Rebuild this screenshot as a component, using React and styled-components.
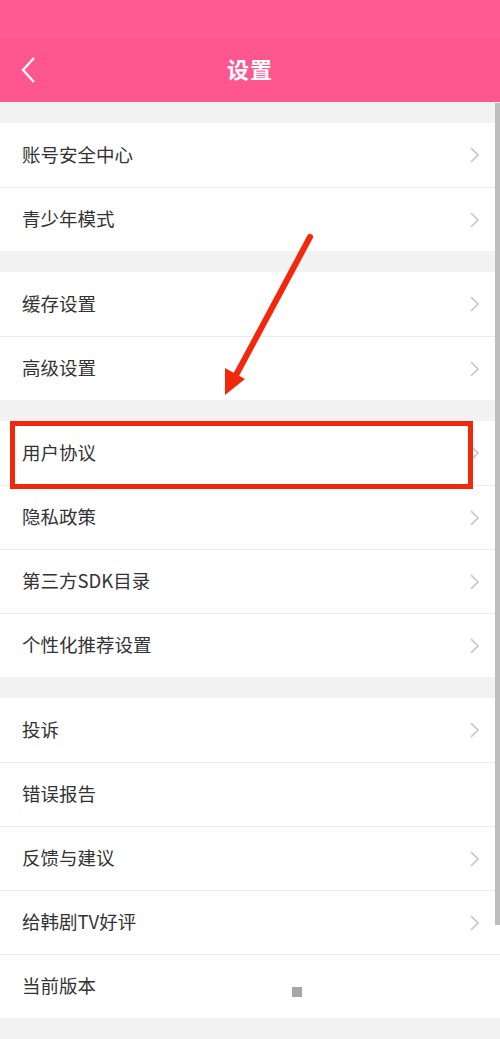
import React from 'react';
import styled, { createGlobalStyle } from 'styled-components';

const GlobalStyle = createGlobalStyle`
  html, body {
    margin: 0;
    padding: 0;
    background: #f2f2f2;
  }
  body {
    font-family: "Noto Sans CJK SC", "Noto Sans", sans-serif;
  }
`;

const Page = styled.div`
  position: relative;
  width: 500px;
  height: 1039px;
  overflow: hidden;
  background: #f2f2f2;
`;

const Header = styled.header`
  height: 102px;
  background: #fe5790;
  display: flex;
  flex-direction: column;
`;

const StatusBar = styled.div`
  height: 38px;
  background: #ff5a92;
`;

const NavBar = styled.div`
  flex: 1;
  display: flex;
  align-items: center;
  justify-content: center;
  position: relative;
  padding-bottom: 4px;
`;

const BackButton = styled.div`
  position: absolute;
  left: 20px;
  top: 18px;
  width: 16px;
  height: 28px;
`;

const Title = styled.h1`
  margin: 0;
  color: #fff;
  font-size: 22px;
  font-weight: 700;
  letter-spacing: 1px;
`;

const Group = styled.section`
  margin-top: 21px;
  background: #fff;
`;

const Row = styled.div`
  height: 64px;
  display: flex;
  align-items: center;
  justify-content: space-between;
  padding: 0 22px;
  box-sizing: border-box;
  border-top: ${(p) => (p.$first ? 'none' : '1px solid #ebebeb')};
`;

const Label = styled.span`
  font-size: 18.5px;
  color: #333;
  line-height: 1;
  margin-top: -2px;
`;

const Chevron = () => (
  <svg width="12" height="18" viewBox="0 0 12 18" style={{ marginRight: -2 }}>
    <polyline points="3,2 10,9 3,16" fill="none" stroke="#c6c6c6" strokeWidth="1.6" />
  </svg>
);

const Dot = styled.span`
  width: 10px;
  height: 10px;
  background: #a6a6a6;
  margin-right: 176px;
  margin-top: 10px;
`;

const ScrollBar = styled.div`
  position: absolute;
  right: 0;
  top: 103px;
  width: 5px;
  height: 822px;
  background: #bdbdbd;
`;

const Annotation = styled.svg`
  position: absolute;
  left: 0;
  top: 0;
  pointer-events: none;
`;

const groups = [
  [{ t: '账号安全中心' }, { t: '青少年模式' }],
  [{ t: '缓存设置' }, { t: '高级设置' }],
  [{ t: '用户协议' }, { t: '隐私政策' }, { t: '第三方SDK目录' }, { t: '个性化推荐设置' }],
  [
    { t: '投诉' },
    { t: '错误报告', none: true },
    { t: '反馈与建议' },
    { t: '给韩剧TV好评' },
    { t: '当前版本', dot: true },
  ],
];

export default function App() {
  return (
    <Page>
      <GlobalStyle />
      <Header>
        <StatusBar />
        <NavBar>
          <BackButton>
            <svg width="16" height="28" viewBox="0 0 16 28">
              <polyline points="14,2 3,14 14,26" fill="none" stroke="#fff" strokeWidth="2.2" />
            </svg>
          </BackButton>
          <Title>设置</Title>
        </NavBar>
      </Header>
      {groups.map((g, gi) => (
        <Group key={gi}>
          {g.map((item, i) => (
            <Row key={item.t} $first={i === 0}>
              <Label>{item.t}</Label>
              {item.dot ? <Dot /> : item.none ? null : <Chevron />}
            </Row>
          ))}
        </Group>
      ))}
      <ScrollBar />
      <Annotation width="500" height="1039" viewBox="0 0 500 1039">
        <rect x="12.5" y="423.5" width="458" height="63" fill="none" stroke="#f2280c" strokeWidth="5" />
        <line x1="310" y1="237" x2="235" y2="377" stroke="#f2280c" strokeWidth="6" strokeLinecap="round" />
        <polygon points="225,395 225,368 245,379" fill="#f2280c" />
      </Annotation>
    </Page>
  );
}
